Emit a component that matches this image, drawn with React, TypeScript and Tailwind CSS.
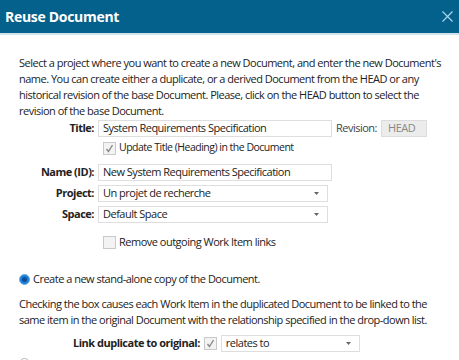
/** Small grey check box, optionally ticked. */
function Check({ checked = false }: { checked?: boolean }) {
  return (
    <span className="w-[13px] h-[13px] border border-[#c9c9c9] bg-[#f3f3f3] flex items-center justify-center shrink-0">
      {checked && (
        <svg width="9" height="9" viewBox="0 0 9 9">
          <path d="M1.5 5 L3.5 7.5 L7.5 1" fill="none" stroke="#8a8a8a" strokeWidth="1.4" />
        </svg>
      )}
    </span>
  )
}

/** Drop-down look-alike. */
function Select({ value, width }: { value: string; width: string }) {
  return (
    <div className={`${width} h-[17px] border border-[#dedede] bg-white flex items-center justify-between pl-[4px] pr-[8px] shrink-0`}>
      <span>{value}</span>
      <svg width="5" height="3" viewBox="0 0 5 3">
        <path d="M0 0 L5 0 L2.5 3 Z" fill="#666" />
      </svg>
    </div>
  )
}

function Label({ children }: { children: string }) {
  return <span className="w-[98px] text-right font-bold pr-[4px] shrink-0">{children}</span>
}

export default function App() {
  return (
    <div
      className="w-[459px] h-[360px] overflow-hidden bg-white text-[11px] tracking-[-0.5px] text-[#222]"
      style={{ fontFamily: '"Open Sans", "Noto Sans", sans-serif' }}
    >
      {/* 标题栏 */}
      <div className="h-[35px] bg-[#03618b] flex items-center justify-between pl-[5px] pr-[5px] border-b-[2px] border-[#cfe3ec]">
        <span className="text-white font-bold text-[14px] tracking-[-0.3px]">Reuse Document</span>
        <svg width="11" height="11" viewBox="0 0 11 11" className="mr-[1px]">
          <path d="M0.5 0.5 L10.5 10.5 M10.5 0.5 L0.5 10.5" stroke="#a9d6ea" strokeWidth="1.2" />
        </svg>
      </div>

      <div className="pl-[19px] pr-[6px]">
        <p className="mt-[20px] leading-[16px]">
          Select a project where you want to create a new Document, and enter the new Document's name. You can create either a duplicate, or a derived Document from the HEAD or any historical revision of the base Document. Please, click on the HEAD button to select the revision of the base Document.
        </p>
      </div>

      <div className="mt-[1px]">
        <div className="flex items-center h-[17px]">
          <Label>Title:</Label>
          <div className="w-[234px] h-[17px] border border-[#dedede] flex items-center pl-[4px] shrink-0">System Requirements Specification</div>
          <span className="ml-[4px] text-[#444]">Revision:</span>
          <span className="ml-[4px] w-[46px] h-[17px] bg-[#ececec] border border-[#dcdcdc] text-[#888] flex items-center pl-[6px]">HEAD</span>
        </div>
        <div className="flex items-center h-[16px] mt-[3px] pl-[103px] gap-[3px] text-[10.5px]">
          <Check checked />
          <span>Update Title (Heading) in the Document</span>
        </div>
        <div className="flex items-center h-[17px] mt-[8px]">
          <Label>Name (ID):</Label>
          <div className="w-[234px] h-[17px] border border-[#dedede] flex items-center pl-[4px] shrink-0">New System Requirements Specification</div>
        </div>
        <div className="flex items-center h-[17px] mt-[4px]">
          <Label>Project:</Label>
          <Select value="Un projet de recherche" width="w-[230px]" />
        </div>
        <div className="flex items-center h-[17px] mt-[4px]">
          <Label>Space:</Label>
          <Select value="Default Space" width="w-[230px]" />
        </div>
        <div className="flex items-center h-[16px] mt-[11px] pl-[103px] gap-[3px]">
          <Check />
          <span>Remove outgoing Work Item links</span>
        </div>
      </div>

      <div className="pl-[19px] pr-[10px] mt-[21px]">
        <div className="flex items-center h-[16px] gap-[3px]">
          <span className="w-[11px] h-[11px] rounded-full bg-[#1e7fd6] border border-[#6aaee8] flex items-center justify-center">
            <span className="w-[5px] h-[5px] rounded-full bg-[#0b4f9c]" />
          </span>
          <span>Create a new stand-alone copy of the Document.</span>
        </div>
        <p className="mt-[9px] leading-[16px]">
          Checking the box causes each Work Item in the duplicated Document to be linked to the same item in the original Document with the relationship specified in the drop-down list.
        </p>
        <div className="flex items-center h-[17px] mt-[7px] pl-[54px] gap-[4px]">
          <span className="font-bold">Link duplicate to original:</span>
          <Check checked />
          <Select value="relates to" width="w-[139px]" />
        </div>
        <div className="mt-[6px] w-[11px] h-[11px] rounded-full border border-[#bbb]" />
      </div>
    </div>
  )
}
